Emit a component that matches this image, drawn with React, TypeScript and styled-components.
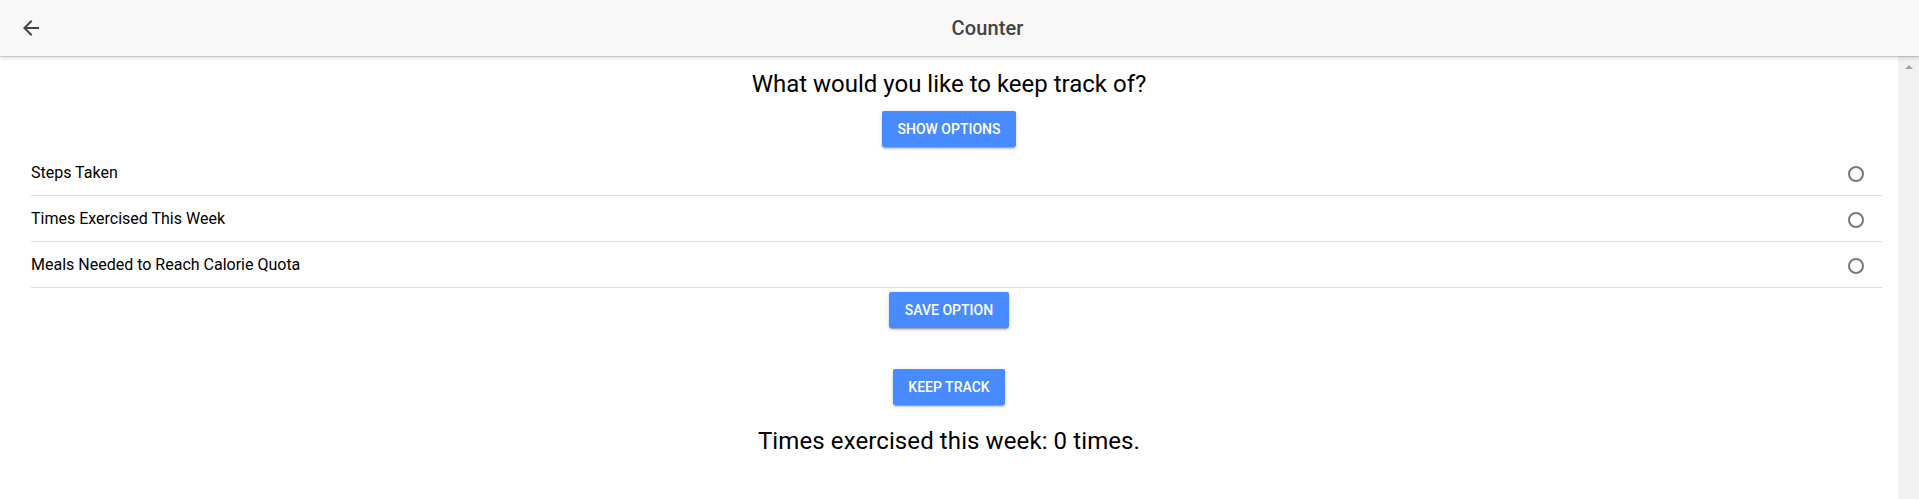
import React, { useState } from "react";
import styled, { createGlobalStyle } from "styled-components";

const GlobalStyle = createGlobalStyle`
  html, body {
    margin: 0;
    padding: 0;
    height: 100%;
    overflow: hidden;
    background: #fff;
    font-family: Roboto, "Noto Sans", "Liberation Sans", sans-serif;
  }
  #root { height: 100%; }
  * { box-sizing: border-box; }
`;

const Page = styled.div`
  display: flex;
  flex-direction: column;
  width: 100vw;
  height: 100vh;
`;

const Header = styled.header`
  position: relative;
  z-index: 2;
  flex: 0 0 56px;
  height: 56px;
  display: flex;
  align-items: center;
  background: #f8f8f8;
  box-shadow: 0 1px 0 rgba(0, 0, 0, 0.12), 0 2px 4px rgba(0, 0, 0, 0.14);
`;

const BackButton = styled.button`
  flex: 0 0 56px;
  height: 56px;
  border: 0;
  background: transparent;
  padding: 0 0 0 19px;
  display: flex;
  align-items: center;
  cursor: pointer;
  color: #424242;
`;

const Title = styled.div`
  flex: 1;
  text-align: center;
  font-size: 20px;
  font-weight: 500;
  color: #424242;
  letter-spacing: 0.1px;
`;

const Body = styled.div`
  flex: 1;
  display: flex;
  min-height: 0;
`;

const Content = styled.main`
  flex: 1;
  display: flex;
  flex-direction: column;
  align-items: center;
  padding-top: 14px;
`;

const Scrollbar = styled.div`
  flex: 0 0 21px;
  background: #f1f1f1;
  display: flex;
  justify-content: center;
  padding-top: 9px;
`;

const ScrollArrow = styled.div`
  width: 0;
  height: 0;
  border-left: 4px solid transparent;
  border-right: 4px solid transparent;
  border-bottom: 4px solid #a3a3a3;
`;

const Question = styled.h2`
  margin: 0;
  font-size: 24px;
  line-height: 28px;
  font-weight: 400;
  color: #000;
`;

const Button = styled.button<{ $mt: number }>`
  margin-top: ${(p) => p.$mt}px;
  height: 36px;
  padding: 0 15.4px;
  border: 0;
  border-radius: 2px;
  background: #488aff;
  color: #fff;
  font-family: Roboto, "Noto Sans", sans-serif;
  font-size: 14px;
  font-weight: 500;
  text-transform: uppercase;
  letter-spacing: 0;
  cursor: pointer;
  box-shadow: 0 2px 2px 0 rgba(0, 0, 0, 0.14), 0 3px 1px -2px rgba(0, 0, 0, 0.2),
    0 1px 5px 0 rgba(0, 0, 0, 0.12);
`;

const List = styled.div`
  align-self: stretch;
  margin: 3px 16px 0 31px;
  display: flex;
  flex-direction: column;
`;

const Item = styled.label`
  height: 46px;
  display: flex;
  align-items: center;
  border-bottom: 1px solid #dedede;
  font-size: 16px;
  color: #000;
  cursor: pointer;
`;

const ItemLabel = styled.span`
  flex: 1;
  margin-top: -1px;
`;

const Radio = styled.span<{ $checked: boolean }>`
  width: 16px;
  height: 16px;
  margin-right: 18px;
  margin-top: 3px;
  border-radius: 50%;
  border: 2px solid ${(p) => (p.$checked ? "#488aff" : "#787878")};
  display: flex;
  align-items: center;
  justify-content: center;
  &::after {
    content: "";
    width: 8px;
    height: 8px;
    border-radius: 50%;
    background: ${(p) => (p.$checked ? "#488aff" : "transparent")};
  }
`;

const Result = styled.p`
  margin: 22px 0 0;
  font-size: 24px;
  line-height: 28px;
  letter-spacing: 0.1px;
  color: #000;
`;

const options = [
  "Steps Taken",
  "Times Exercised This Week",
  "Meals Needed to Reach Calorie Quota",
];

export default function App() {
  const [selected, setSelected] = useState<number | null>(null);
  return (
    <Page>
      <GlobalStyle />
      <Header>
        <BackButton aria-label="Back">
          <svg width="24" height="24" viewBox="0 0 24 24" fill="currentColor">
            <path d="M20 11H7.83l5.59-5.59L12 4l-8 8 8 8 1.41-1.41L7.83 13H20v-2z" />
          </svg>
        </BackButton>
        <Title>Counter</Title>
      </Header>
      <Body>
        <Content>
          <Question>What would you like to keep track of?</Question>
          <Button $mt={13}>Show Options</Button>
          <List>
            {options.map((o, i) => (
              <Item key={o} onClick={() => setSelected(i)}>
                <ItemLabel>{o}</ItemLabel>
                <Radio $checked={selected === i} />
              </Item>
            ))}
          </List>
          <Button $mt={4}>Save Option</Button>
          <Button $mt={41}>Keep Track</Button>
          <Result>Times exercised this week: 0 times.</Result>
        </Content>
        <Scrollbar>
          <ScrollArrow />
        </Scrollbar>
      </Body>
    </Page>
  );
}
